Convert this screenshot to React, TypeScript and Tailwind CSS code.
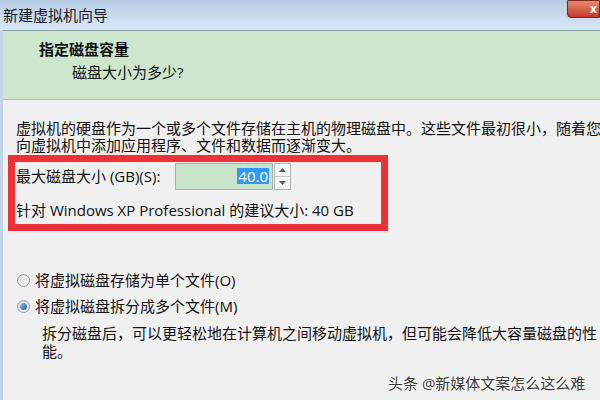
const font = "font-['Open_Sans','Noto_Sans_CJK_SC',sans-serif]";

function Radio({ checked }: { checked?: boolean }) {
  return (
    <span className="relative flex h-[13px] w-[13px] items-center justify-center rounded-full border border-[#9a9a9a] bg-gradient-to-br from-[#dcdcdc] to-[#f8f8f8]">
      {checked && (
        <span className="h-[7px] w-[7px] rounded-full bg-gradient-to-br from-[#8fc4ec] to-[#1f5f92]" />
      )}
    </span>
  );
}

export default function App() {
  return (
    <div
      className={`relative flex h-[400px] w-[600px] flex-col overflow-hidden bg-[#f0f0f0] text-[15px] leading-[16px] text-[#111] ${font}`}
    >
      {/* title bar */}
      <div className="flex h-[30px] shrink-0 items-center bg-gradient-to-b from-[#b7cde4] to-[#d9e8f6] pl-[3px] text-[15px] text-[#1a1a1a]">
        新建虚拟机向导
      </div>
      <div className="absolute right-0 top-0 flex h-[18px] w-[33px] items-center justify-end rounded-bl-[4px] border border-[#7a2a1a] bg-gradient-to-b from-[#e58a6e] to-[#c0392b] pr-[2px] text-[12px] font-bold leading-none text-white">
        x
      </div>

      <div className="flex-1 border-l-[3px] border-[#c3d6e9]">
        {/* header */}
        <div className="h-[70px] border-b border-t border-b-[#b4c4b4] border-t-[#8aa3b3] bg-[#cde6cd] pl-[36px] pt-[10px]">
          <div className="text-[15px] font-bold leading-[16px]">指定磁盘容量</div>
          <div className="mt-[7px] pl-[33px] leading-[16px]">磁盘大小为多少?</div>
        </div>

        {/* description */}
        <div className="mt-[20px] whitespace-nowrap pl-[13px] leading-[17px]">
          <div>虚拟机的硬盘作为一个或多个文件存储在主机的物理磁盘中。这些文件最初很小，随着您在</div>
          <div>向虚拟机中添加应用程序、文件和数据而逐渐变大。</div>
        </div>

        {/* size box */}
        <div className="ml-[5px] mt-[1px] h-[76px] w-[380px] border-[7px] border-[#e8333b] pl-[1px]">
          <div className="flex h-[28px] items-center">
            <span className="w-[159px] whitespace-nowrap">最大磁盘大小 (GB)(S):</span>
            <div className="flex h-[27px] items-stretch">
              <div className="flex w-[98px] items-center justify-end border border-[#abadb3] bg-[#c9e5c9] pr-[3px]">
                <span className="bg-[#3399ff] px-[1px] text-white">40.0</span>
              </div>
              <div className="ml-[1px] flex w-[17px] flex-col border border-[#b5b5b5] bg-[#f4f4f4]">
                <div className="flex flex-1 items-center justify-center border-b border-[#c8c8c8]">
                  <svg width="7" height="4" viewBox="0 0 7 4">
                    <path d="M0 4 L3.5 0 L7 4 Z" fill="#5a5a5a" />
                  </svg>
                </div>
                <div className="flex flex-1 items-center justify-center">
                  <svg width="7" height="4" viewBox="0 0 7 4">
                    <path d="M0 0 L3.5 4 L7 0 Z" fill="#5a5a5a" />
                  </svg>
                </div>
              </div>
            </div>
          </div>
          <div className="mt-[12px] whitespace-nowrap">
            针对 Windows XP Professional 的建议大小: 40 GB
          </div>
        </div>

        {/* options */}
        <div className="mt-[41px] flex flex-col gap-[10px] pl-[14px]">
          <label className="flex items-center gap-[5px]">
            <Radio />
            <span>将虚拟磁盘存储为单个文件(O)</span>
          </label>
          <label className="flex items-center gap-[5px]">
            <Radio checked />
            <span>将虚拟磁盘拆分成多个文件(M)</span>
          </label>
        </div>
        <div className="mt-[10px] whitespace-nowrap pl-[39px] leading-[18px]">
          <div>拆分磁盘后，可以更轻松地在计算机之间移动虚拟机，但可能会降低大容量磁盘的性</div>
          <div>能。</div>
        </div>
      </div>

      {/* watermark */}
      <div className="absolute left-[388px] top-[374px] text-[15px] leading-[18px] text-[#3a3a3a] [text-shadow:0_0_2px_#fff,0_0_2px_#fff]">
        头条 @新媒体文案怎么这么难
      </div>
    </div>
  );
}
